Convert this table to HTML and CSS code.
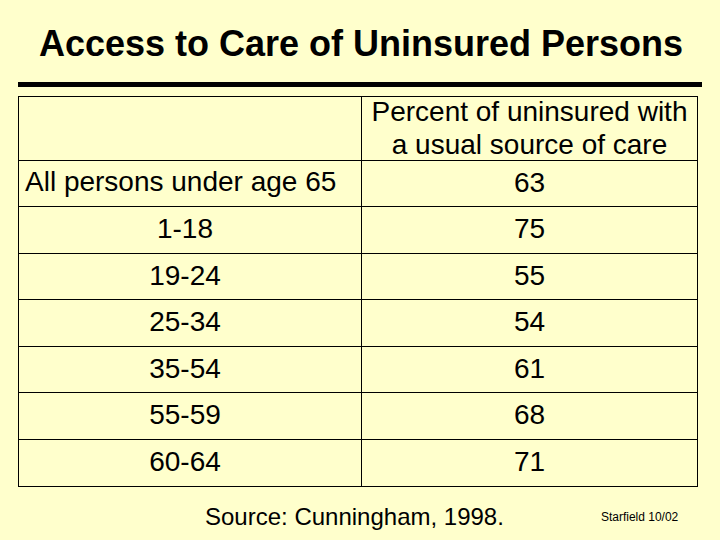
FILE: index.html
```html
<!DOCTYPE html>
<html lang="en">
<head>
<meta charset="utf-8">
<title>Access to Care of Uninsured Persons</title>
<link rel="stylesheet" href="styles.css">
</head>
<body>
<div class="slide">
  <h1 class="title">Access to Care of Uninsured Persons</h1>
  <div class="rule"></div>
  <div class="grid">
    <div class="cell"></div>
    <div class="cell head">Percent of uninsured with<br>a usual source of care</div>
    <div class="cell label">All persons under age 65</div>
    <div class="cell value">63</div>
    <div class="cell age">1-18</div>
    <div class="cell value">75</div>
    <div class="cell age">19-24</div>
    <div class="cell value">55</div>
    <div class="cell age">25-34</div>
    <div class="cell value">54</div>
    <div class="cell age">35-54</div>
    <div class="cell value">61</div>
    <div class="cell age">55-59</div>
    <div class="cell value">68</div>
    <div class="cell age">60-64</div>
    <div class="cell value">71</div>
  </div>
  <div class="footer">
    <span class="source">Source: Cunningham, 1998.</span>
    <span class="credit">Starfield 10/02</span>
  </div>
</div>
</body>
</html>
```

FILE: styles.css
```css
* { box-sizing: border-box; }
html, body {
  margin: 0;
  padding: 0;
  background: #ffffcc;
}
body {
  font-family: "Liberation Sans", Arial, sans-serif;
  color: #000;
}
.slide {
  width: 720px;
  height: 540px;
  display: flex;
  flex-direction: column;
}
.title {
  margin: 0;
  padding-top: 26px;
  font-size: 36px;
  line-height: 36px;
  font-weight: bold;
  text-align: center;
  padding-left: 2px;
}
.rule {
  margin: 20px 18px 0 18px;
  height: 5px;
  background: #000;
}
.grid {
  margin: 9px 0 0 18px;
  width: 680px;
  display: grid;
  grid-template-columns: 343px 336px;
  grid-template-rows: 64px 46px 47px 46px 47px 46px 47px 47px;
  border-top: 1px solid #000;
  border-left: 1px solid #000;
}
.cell {
  border-right: 1px solid #000;
  border-bottom: 1px solid #000;
  font-size: 28px;
  display: flex;
  align-items: center;
  padding-bottom: 2px;
}
.head {
  justify-content: center;
  text-align: center;
  line-height: 33px;
  padding-bottom: 1px;
}
.label {
  padding-left: 6px;
  padding-bottom: 4px;
}
.age {
  justify-content: center;
  padding-right: 10px;
}
.value {
  justify-content: center;
}
.footer {
  margin-top: 18px;
  padding-left: 205px;
  display: flex;
  align-items: center;
  gap: 97px;
  height: 24px;
}
.source {
  font-size: 24px;
  line-height: 24px;
}
.credit {
  font-size: 12px;
  line-height: 12px;
}
```
